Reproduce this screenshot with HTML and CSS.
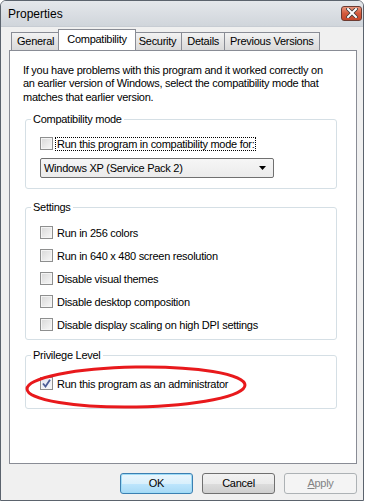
FILE: index.html
```html
<!DOCTYPE html>
<html lang="en">
<head>
    <meta charset="UTF-8" />
    <title>Properties</title>
    <link rel="stylesheet" href="styles.css">
</head>
<body>
    <div class="window">
        <div class="titlebar">
            <span class="title">Properties</span>
            <span class="close">
                <svg width="12" height="10" viewBox="0 0 12 10">
                    <path d="M2 1 L10 9 M10 1 L2 9" stroke="#3b3b3b" stroke-width="3.6" stroke-linecap="square"/>
                    <path d="M2 1 L10 9 M10 1 L2 9" stroke="#ffffff" stroke-width="2" stroke-linecap="square"/>
                </svg>
            </span>
        </div>
        <div class="client">
            <div class="tabs">
                <span class="tab">General</span>
                <span class="tab active">Compatibility</span>
                <span class="tab">Security</span>
                <span class="tab">Details</span>
                <span class="tab">Previous Versions</span>
            </div>
            <div class="panel">
                <p class="intro">If you have problems with this program and it worked correctly on an earlier version of Windows, select the compatibility mode that matches that earlier version.</p>

                <fieldset class="group group-compat">
                    <legend>Compatibility mode</legend>
                    <div class="check-row">
                        <span class="cb"></span>
                        <span class="label focus">Run this program in compatibility mode for:</span>
                    </div>
                    <div class="select">
                        <span>Windows XP (Service Pack 2)</span>
                        <svg class="arrow" width="7" height="4" viewBox="0 0 7 4"><path d="M0 0 H7 L3.5 4 Z" fill="#000"/></svg>
                    </div>
                </fieldset>

                <fieldset class="group group-settings">
                    <legend>Settings</legend>
                    <div class="check-row"><span class="cb"></span><span class="label">Run in 256 colors</span></div>
                    <div class="check-row"><span class="cb"></span><span class="label">Run in 640 x 480 screen resolution</span></div>
                    <div class="check-row"><span class="cb"></span><span class="label">Disable visual themes</span></div>
                    <div class="check-row"><span class="cb"></span><span class="label">Disable desktop composition</span></div>
                    <div class="check-row"><span class="cb"></span><span class="label">Disable display scaling on high DPI settings</span></div>
                </fieldset>

                <fieldset class="group group-priv">
                    <legend>Privilege Level</legend>
                    <div class="check-row">
                        <span class="cb checked">
                            <svg width="9" height="9" viewBox="0 0 9 9"><path d="M1 4.5 L3.5 7.5 L8 0.8" fill="none" stroke="#4a5c96" stroke-width="1.8"/></svg>
                        </span>
                        <span class="label">Run this program as an administrator</span>
                    </div>
                    <!-- red marker drawn over the screenshot -->
                    <svg class="circle" width="230" height="50" viewBox="0 0 230 50">
                        <ellipse cx="113" cy="23" rx="109" ry="20" fill="none" stroke="#e8191c" stroke-width="3" transform="rotate(-1 113 23)"/>
                    </svg>
                </fieldset>
            </div>
            <div class="buttons">
                <span class="btn default">OK</span>
                <span class="btn">Cancel</span>
                <span class="btn disabled"><u>A</u>pply</span>
            </div>
        </div>
    </div>
</body>
</html>
```

FILE: styles.css
```css
body {
    margin: 0;
    background-color: #ffffff;
    font-family: "Liberation Sans", Arial, sans-serif;
    font-size: 11px;
    letter-spacing: -0.27px;
    color: #000000;
}

.window {
    width: 362px;
    height: 499px;
    border: 1px solid #5b636d;
    border-radius: 6px 6px 0 0;
    background-color: #f0f0f0;
    display: flex;
    flex-direction: column;
}

.titlebar {
    height: 25px;
    display: flex;
    align-items: center;
    justify-content: space-between;
    padding: 0 1px 0 7px;
    background: linear-gradient(#e4e7eb, #d0d5db);
    border-radius: 5px 5px 0 0;
}

.title {
    font-size: 12px;
    letter-spacing: 0;
    margin-top: 1px;
}

.close {
    width: 19px;
    height: 13px;
    border: 1px solid #6d3b32;
    border-radius: 3px;
    background: linear-gradient(#e9967d, #d35a3c 50%, #c4472b);
    display: flex;
    align-items: center;
    justify-content: center;
    margin-top: -1px;
}

.client {
    flex: 1;
    padding: 3px 0 0 8px;
    background-color: #f0f0f0;
    border-top: 1px solid #c7ccd3;
}

.tabs {
    display: flex;
    align-items: flex-end;
    height: 20px;
    padding-left: 2px;
    position: relative;
    z-index: 1;
}

.tab {
    height: 17px;
    line-height: 17px;
    padding: 0 5px;
    border: 1px solid #898c95;
    border-bottom: none;
    margin-left: -1px;
    background: linear-gradient(#f3f3f3, #e5e5e5 50%, #d9d9d9);
}

.tab:first-child {
    margin-left: 0;
}

.tab.active {
    height: 20px;
    line-height: 18px;
    padding: 0 8px;
    margin: 0 -2px 0 -2px;
    background: #ffffff;
    position: relative;
}

.panel {
    width: 346px;
    height: 412px;
    border: 1px solid #898c95;
    background-color: #ffffff;
    padding: 0;
}

.intro {
    margin: 13px 0 0 13px;
    width: 306px;
    line-height: 13.4px;
}

.group {
    margin: 9px 0 0 15px;
    width: 310px;
    padding: 0;
    border: 1px solid #d5dfe5;
    border-radius: 3px;
    position: relative;
}

.group legend {
    margin-left: 5px;
    padding: 0 2px;
    line-height: 13px;
}

.check-row {
    display: flex;
    align-items: center;
    height: 15px;
    margin-left: 14px;
}

.cb {
    width: 11px;
    height: 11px;
    border: 1px solid #8e8f8f;
    background: linear-gradient(135deg, #d8d8d8, #f8f8f8);
    box-shadow: inset 0 0 0 1px #f4f4f4;
    display: flex;
    align-items: center;
    justify-content: center;
    flex-shrink: 0;
}

.cb.checked {
    background: linear-gradient(135deg, #dfe3ef, #f8f9fc);
}

.label {
    margin-left: 4px;
    white-space: nowrap;
}

.label.focus {
    outline: 1px dotted #000000;
    padding: 0 1px;
    margin-left: 3px;
}

.group-compat .check-row {
    margin-top: 10px;
}

.select {
    margin: 7px 0 10px 14px;
    width: 222px;
    height: 18px;
    border: 1px solid #707070;
    border-radius: 2px;
    background: linear-gradient(#f6f6f6, #ebebeb);
    display: flex;
    align-items: center;
    justify-content: space-between;
    padding: 0 7px 0 3px;
}

.group-settings {
    margin-top: 12px;
}

.group-settings .check-row {
    margin-top: 8px;
}

.group-settings .check-row:first-of-type {
    margin-top: 11px;
}

.group-settings .check-row:last-child {
    margin-bottom: 7px;
}

.group-priv {
    margin-top: 9px;
}

.group-priv .check-row {
    margin: 14px 0 17px 14px;
}

.circle {
    position: absolute;
    left: -3px;
    top: 2px;
}

.buttons {
    display: flex;
    justify-content: flex-end;
    gap: 9px;
    width: 348px;
    margin-top: 9px;
}

.btn {
    width: 71px;
    height: 19px;
    line-height: 19px;
    text-align: center;
    border: 1px solid #707070;
    border-radius: 3px;
    background: linear-gradient(#f2f2f2, #ebebeb 50%, #dddddd 51%, #cfcfcf);
}

.btn.default {
    border-color: #3c7fb1;
    background: linear-gradient(#eaf6fd, #d9f0fc 50%, #bee6fd 51%, #a7d9f5);
    box-shadow: inset 0 0 0 1px #9fdcf7;
}

.btn.disabled {
    border-color: #adb2b5;
    background: #f4f4f4;
    color: #838383;
}
```
